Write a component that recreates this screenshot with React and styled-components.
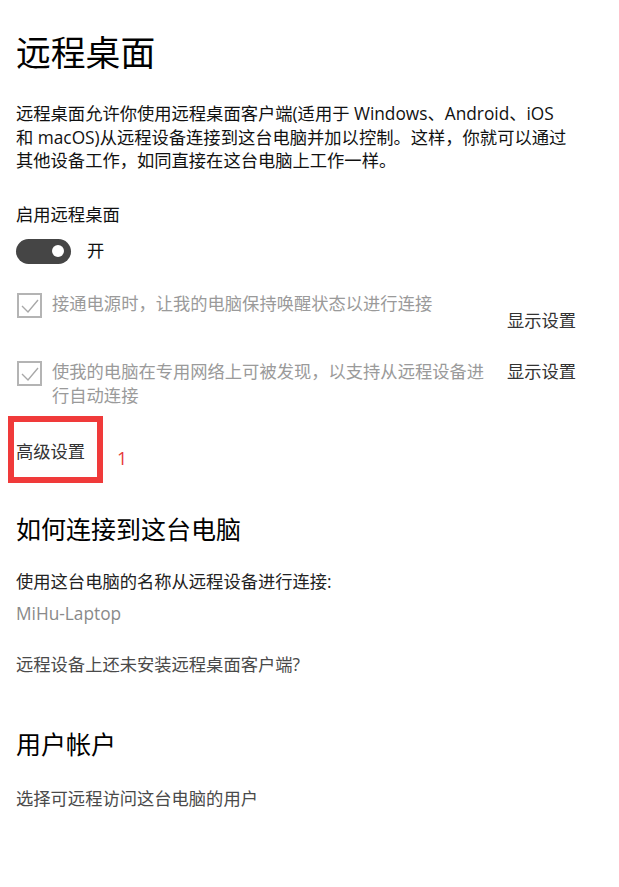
import React from "react"
import styled, { createGlobalStyle } from "styled-components"

const GlobalStyle = createGlobalStyle`
  html, body {
    margin: 0;
    padding: 0;
    background: #ffffff;
  }
  body {
    font-family: "Open Sans", "Noto Sans CJK SC", sans-serif;
    color: #000;
  }
`

const App = () => {
  return (
    <Page>
      <GlobalStyle />
      <Title>远程桌面</Title>
      <Intro>
        远程桌面允许你使用远程桌面客户端(适用于 Windows、Android、iOS
        <br />
        和 macOS)从远程设备连接到这台电脑并加以控制。这样，你就可以通过
        <br />
        其他设备工作，如同直接在这台电脑上工作一样。
      </Intro>

      <Label>启用远程桌面</Label>
      <ToggleRow>
        <Toggle>
          <Knob />
        </Toggle>
        <ToggleText>开</ToggleText>
      </ToggleRow>

      <CheckRow $top={28}>
        <CheckBox>
          <CheckIcon />
        </CheckBox>
        <CheckText>接通电源时，让我的电脑保持唤醒状态以进行连接</CheckText>
        <SideLink $offset={17}>显示设置</SideLink>
      </CheckRow>

      <CheckRow $top={27}>
        <CheckBox>
          <CheckIcon />
        </CheckBox>
        <CheckText>
          使我的电脑在专用网络上可被发现，以支持从远程设备进行自动连接
        </CheckText>
        <SideLink $offset={0}>显示设置</SideLink>
      </CheckRow>

      <AdvancedWrap>
        <Advanced>高级设置</Advanced>
        <Highlight />
        <Marker>1</Marker>
      </AdvancedWrap>

      <Heading $top={48}>如何连接到这台电脑</Heading>
      <Body $top={24} $color="#222">
        使用这台电脑的名称从远程设备进行连接:
      </Body>
      <Body $top={8} $color="#8a8a8a">
        MiHu-Laptop
      </Body>
      <Body $top={27} $color="#4a4a4a">
        远程设备上还未安装远程桌面客户端?
      </Body>

      <Heading $top={50}>用户帐户</Heading>
      <Body $top={26} $color="#4a4a4a">
        选择可远程访问这台电脑的用户
      </Body>
    </Page>
  )
}

const CheckIcon = () => (
  <svg width="21" height="21" viewBox="0 0 21 21">
    <path
      d="M3 11 L9 17 L19 5"
      fill="none"
      stroke="#a8a8a8"
      strokeWidth="1.4"
    />
  </svg>
)

export default App

const Page = styled.div`
  padding: 31px 16px 40px 16px;
  width: 619px;
  box-sizing: border-box;
`

const Title = styled.h1`
  margin: 0;
  font-size: 34.8px;
  font-weight: 400;
  line-height: 44px;
  color: #000;
`

const Intro = styled.p`
  margin: 27px 0 0 0;
  font-size: 17.3px;
  line-height: 23.5px;
  color: #111;
  white-space: nowrap;
`

const Label = styled.div`
  margin-top: 30px;
  font-size: 17.3px;
  line-height: 24px;
  color: #111;
`

const ToggleRow = styled.div`
  margin-top: 12px;
  display: flex;
  align-items: center;
  gap: 16px;
`

const Toggle = styled.div`
  width: 55px;
  height: 25px;
  border-radius: 13px;
  background: #454545;
  display: flex;
  align-items: center;
  justify-content: flex-end;
  padding-right: 7px;
  box-sizing: border-box;
`

const Knob = styled.div`
  width: 12px;
  height: 12px;
  border-radius: 50%;
  background: #fff;
`

const ToggleText = styled.span`
  font-size: 17.3px;
  line-height: 24px;
  color: #111;
`

const CheckRow = styled.div`
  margin-top: ${(p) => p.$top}px;
  display: flex;
  align-items: flex-start;
`

const CheckBox = styled.div`
  width: 25px;
  height: 25px;
  margin-top: 1px;
  margin-left: 1px;
  border: 2px solid #b4b4b4;
  box-sizing: border-box;
  flex-shrink: 0;
  display: flex;
  align-items: center;
  justify-content: center;
`

const CheckText = styled.div`
  width: 445px;
  margin-left: 10px;
  font-size: 17.3px;
  line-height: 24px;
  color: #9a9a9a;
`

const SideLink = styled.div`
  margin-left: 10px;
  margin-top: ${(p) => p.$offset}px;
  font-size: 17.3px;
  line-height: 24px;
  color: #333;
  white-space: nowrap;
`

const AdvancedWrap = styled.div`
  position: relative;
  margin-top: 32px;
  width: max-content;
`

const Advanced = styled.div`
  font-size: 17.3px;
  line-height: 24px;
  color: #333;
`

const Highlight = styled.div`
  position: absolute;
  left: -8px;
  top: -24px;
  width: 95px;
  height: 67px;
  border: 6px solid #f03a3a;
  box-sizing: border-box;
  pointer-events: none;
`

const Marker = styled.span`
  position: absolute;
  left: 101px;
  top: 6px;
  font-family: "Open Sans", sans-serif;
  font-size: 18px;
  line-height: 24px;
  color: #e63a3a;
`

const Heading = styled.h2`
  margin: ${(p) => p.$top}px 0 0 0;
  font-size: 25px;
  font-weight: 400;
  line-height: 34px;
  color: #000;
`

const Body = styled.div`
  margin-top: ${(p) => p.$top}px;
  font-size: 17.3px;
  line-height: 24px;
  color: ${(p) => p.$color};
`
